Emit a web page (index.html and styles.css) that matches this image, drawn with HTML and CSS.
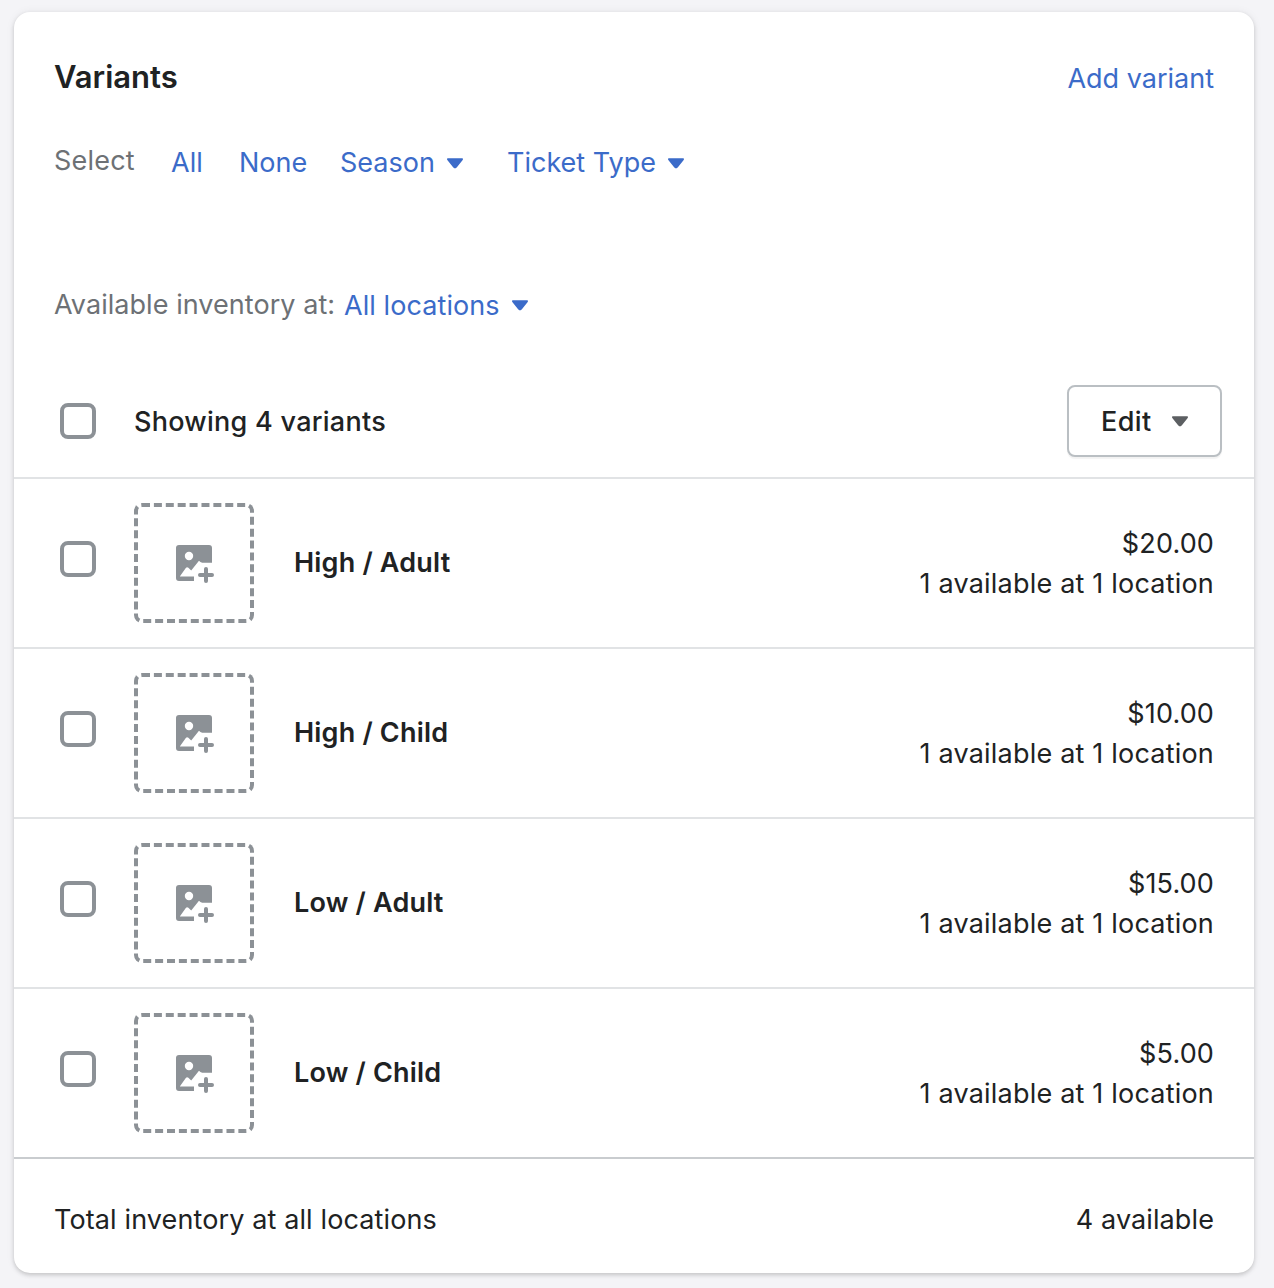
FILE: index.html
```html
<!DOCTYPE html>
<html lang="en">
<head>
<meta charset="utf-8">
<title>Variants</title>
<link rel="stylesheet" href="styles.css">
</head>
<body>
<svg class="sprite" aria-hidden="true">
  <symbol id="caret" viewBox="0 0 16 11"><path d="M1 .3h14c.9 0 1.3 1 .7 1.6L9.7 9.6c-.9 1.1-2.5 1.1-3.4 0L.3 1.9C-.3 1.3.1.3 1 .3z"/></symbol>
  <symbol id="add-image" viewBox="0 0 20 20"><path fill-rule="evenodd" d="M2.5 1h15A1.5 1.5 0 0 1 19 2.5v7.4h-4.9l-.9-.4-.7-.6-3.9 4.9-1.4-1.4a.9.9 0 0 0-1.3.1L2.9 16.8H10V19H2.5A1.5 1.5 0 0 1 1 17.5v-15A1.5 1.5 0 0 1 2.5 1zm5 3.4a2.1 2.1 0 1 0 0 4.2 2.1 2.1 0 0 0 0-4.2zM16 12a1 1 0 0 1 1 1v2h2a1 1 0 1 1 0 2h-2v2a1 1 0 1 1-2 0v-2h-2a1 1 0 1 1 0-2h2v-2a1 1 0 0 1 1-1z"/></symbol>
</svg>
<main class="card">
  <header class="card-header">
    <h2 class="title">Variants</h2>
    <a class="link add">Add variant</a>
  </header>
  <div class="select-row">
    <span class="muted select-label">Select</span>
    <a class="link all">All</a>
    <a class="link none">None</a>
    <a class="link season">Season <svg class="caret"><use href="#caret"/></svg></a>
    <a class="link type">Ticket Type <svg class="caret"><use href="#caret"/></svg></a>
  </div>
  <div class="location-row">
    <span class="muted inventory-label">Available inventory at:</span>
    <a class="link locations">All locations <svg class="caret"><use href="#caret"/></svg></a>
  </div>
  <div class="list-header">
    <span class="checkbox"></span>
    <span class="showing">Showing 4 variants</span>
    <button class="edit"><span class="edit-label">Edit</span><svg class="caret"><use href="#caret"/></svg></button>
  </div>
  <ul class="variants">
    <li class="variant">
      <span class="checkbox"></span>
      <span class="thumb"><svg class="thumb-icon"><use href="#add-image"/></svg></span>
      <span class="name">High / Adult</span>
      <div class="stock"><span class="price">$20.00</span><span class="available">1 available at 1 location</span></div>
    </li>
    <li class="variant">
      <span class="checkbox"></span>
      <span class="thumb"><svg class="thumb-icon"><use href="#add-image"/></svg></span>
      <span class="name">High / Child</span>
      <div class="stock"><span class="price">$10.00</span><span class="available">1 available at 1 location</span></div>
    </li>
    <li class="variant">
      <span class="checkbox"></span>
      <span class="thumb"><svg class="thumb-icon"><use href="#add-image"/></svg></span>
      <span class="name">Low / Adult</span>
      <div class="stock"><span class="price">$15.00</span><span class="available">1 available at 1 location</span></div>
    </li>
    <li class="variant">
      <span class="checkbox"></span>
      <span class="thumb"><svg class="thumb-icon"><use href="#add-image"/></svg></span>
      <span class="name">Low / Child</span>
      <div class="stock"><span class="price">$5.00</span><span class="available">1 available at 1 location</span></div>
    </li>
  </ul>
  <footer class="total">
    <span class="total-label">Total inventory at all locations</span>
    <span class="total-count">4 available</span>
  </footer>
</main>
</body>
</html>
```
FILE: styles.css
```css
* { box-sizing: border-box; }
body {
  margin: 0;
  padding: 12px 20px 15px 14px;
  height: 1288px;
  background: #f4f4f7;
  color: #202223;
  font: 400 27px/40px Inter, "Liberation Sans", sans-serif;
  white-space: nowrap;
}
.sprite { display: none; }
.card {
  height: 1261px;
  background: #fff;
  border-radius: 16px;
  box-shadow: 0 0 10px rgba(23, 24, 24, .06), 0 2px 4px rgba(0, 0, 0, .17);
}
.card-header {
  display: flex;
  justify-content: space-between;
  height: 86px;
  padding: 45px 40px 0;
}
.title { margin: 0; font-size: 31px; font-weight: 600; line-height: 40px; }
.add { padding-top: 2px; }
.link { color: #3b6bc9; }
.muted { color: #6d7175; }
.select-row { display: flex; padding: 43px 40px 0; height: 86px; }
.select-row .link { padding-top: 2px; }
.select-label { width: 117px; letter-spacing: .2px; }
.all { width: 68px; }
.none { width: 101px; }
.season { width: 167px; }
.caret { width: 16px; height: 11px; fill: currentColor; }
.link .caret { margin-left: 5px; vertical-align: 3px; }
.type .caret { margin-left: 4px; }
.location-row { display: flex; height: 40px; margin-top: 101px; padding-left: 40px; }
.inventory-label { width: 290px; letter-spacing: .05px; }
.locations { padding-top: 1px; letter-spacing: .08px; }
.locations .caret { vertical-align: 4px; }
.list-header {
  display: flex;
  align-items: center;
  height: 152px;
  padding: 40px 32px 0 46px;
}
.checkbox { flex: none; width: 36px; height: 36px; border: 4px solid #8c9196; border-radius: 8px; }
.showing { margin-left: 38px; padding-top: 2px; font-weight: 500; letter-spacing: .27px; }
.edit {
  display: flex;
  align-items: center;
  gap: 20px;
  width: 155px;
  height: 72px;
  margin-left: auto;
  padding: 0 0 0 32px;
  border: 2px solid #babfc3;
  border-radius: 8px;
  background: #fff;
  box-shadow: 0 2px 1px rgba(0, 0, 0, .05);
  color: #202223;
  font: inherit;
  font-weight: 500;
}
.edit-label { padding-top: 2px; letter-spacing: .4px; }
.edit .caret { margin-top: 1px; fill: #5c5f62; }
.variants { margin: 0; padding: 0; list-style: none; }
.variant {
  display: flex;
  align-items: center;
  height: 170px;
  padding: 0 40px 0 46px;
  border-top: 2px solid #e1e3e5;
}
.variant .checkbox { margin-top: -8px; }
.thumb {
  display: flex;
  align-items: center;
  justify-content: center;
  width: 120px;
  height: 120px;
  margin-left: 38px;
  border: 4px dashed #8c9196;
  border-radius: 8px;
}
.thumb-icon { width: 40px; height: 40px; fill: #8c9196; }
.name { margin-left: 40px; font-weight: 600; letter-spacing: .2px; }
.stock { display: flex; flex-direction: column; margin: 2px 0 0 auto; text-align: right; }
.price { letter-spacing: .15px; }
.available { letter-spacing: .2px; }
.total {
  display: flex;
  justify-content: space-between;
  padding: 41px 40px 0;
  border-top: 2px solid #c9cccf;
}
.total-label { letter-spacing: .12px; }
.total-count { letter-spacing: .1px; }
```
